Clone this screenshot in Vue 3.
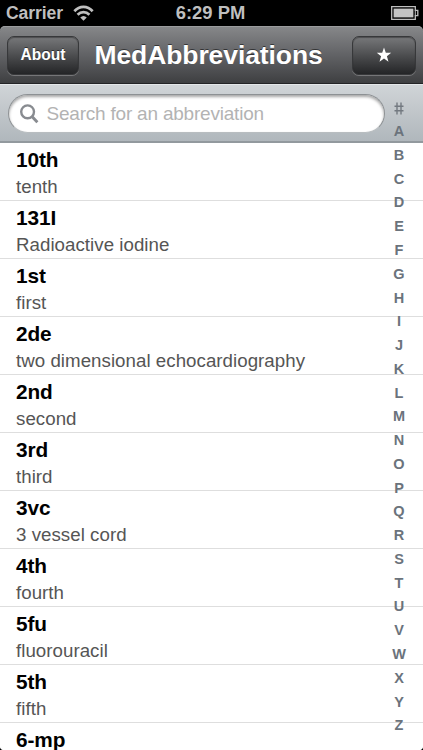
<script setup>
const rows = [
  ['10th', 'tenth'],
  ['131I', 'Radioactive iodine'],
  ['1st', 'first'],
  ['2de', 'two dimensional echocardiography'],
  ['2nd', 'second'],
  ['3rd', 'third'],
  ['3vc', '3 vessel cord'],
  ['4th', 'fourth'],
  ['5fu', 'fluorouracil'],
  ['5th', 'fifth'],
  ['6-mp', ''],
]
const letters = 'ABCDEFGHIJKLMNOPQRSTUVWXYZ'.split('')
</script>

<template>
  <div class="phone">
    <div class="status">
      <div class="carrier">
        <span>Carrier</span>
        <svg class="wifi" width="21" height="16" viewBox="0 0 22 16" preserveAspectRatio="none">
          <g fill="none" stroke="#bfbfbf" stroke-width="2.8">
            <path d="M1.4 6.2C6.8.4 15.2.4 20.6 6.2" />
            <path d="M4.8 9.8c3.6-3.7 8.8-3.7 12.4 0" />
          </g>
          <path d="M7.6 12.4c2.1-2 4.7-2 6.8 0L11 15.8z" fill="#bfbfbf" />
        </svg>
      </div>
      <span class="time">6:29 PM</span>
      <svg class="battery" width="28" height="14" viewBox="0 0 28 14">
        <path d="M.7.7h23.6v3.6h2.5v5.4h-2.5v3.6H.7z" fill="none" stroke="#bfbfbf" stroke-width="1.3" />
        <rect x="2.6" y="2.6" width="19.8" height="8.8" fill="#c4c4c4" />
        <path d="M24.3 4.5v5" stroke="#bfbfbf" stroke-width="1" />
      </svg>
    </div>
    <header class="nav">
      <button class="btn about"><span>About</span></button>
      <h1><span>MedAbbreviations</span></h1>
      <button class="btn fav">
        <svg width="16" height="16" viewBox="0 0 16 16">
          <path d="M8 .5l1.8 5.3h5.4l-4.3 3.5 1.6 5.5L8 11.6l-4.5 3.2 1.6-5.5L.8 5.8h5.4z" fill="#fff" />
        </svg>
      </button>
    </header>
    <div class="search">
      <div class="field">
        <svg width="20" height="22" viewBox="0 0 20 22">
          <circle cx="7.6" cy="8.8" r="6.4" fill="none" stroke="#888b90" stroke-width="2.4" />
          <path d="M12 13.4l5.4 5.8" stroke="#888b90" stroke-width="2.9" />
        </svg>
        <span>Search for an abbreviation</span>
      </div>
    </div>
    <ul class="list">
      <li v-for="r in rows" :key="r[0]">
        <strong>{{ r[0] }}</strong>
        <span v-if="r[1]">{{ r[1] }}</span>
      </li>
    </ul>
    <nav class="index">
      <span class="hash">
        <svg width="10" height="13" viewBox="0 0 10 13">
          <path d="M3 .4v12.2M7 .4v12.2M.5 4.2h9M.5 8.8h9" fill="none" stroke="#737980" stroke-width="1.4" />
        </svg>
      </span>
      <span v-for="l in letters" :key="l">{{ l }}</span>
    </nav>
    <i class="corner left"></i>
    <i class="corner right"></i>
  </div>
</template>

<style>
body { margin: 0; overflow: hidden; background: #000; }
</style>

<style scoped>
.phone {
  position: relative;
  display: flex;
  flex-direction: column;
  width: 423px;
  height: 750px;
  overflow: hidden;
  background: #000;
  font-family: "Liberation Sans", Arial, sans-serif;
}
.status {
  display: grid;
  grid-template-columns: 1fr auto 1fr;
  align-items: center;
  height: 26px;
  flex: none;
  padding: 0 4px 0 6px;
  color: #bfbfbf;
  font-size: 18.4px;
  font-weight: bold;
}
.carrier { display: flex; align-items: center; gap: 10px; font-size: 17.6px; letter-spacing: -0.12px; }
.time { letter-spacing: 0; margin-right: 4px; }
.battery { justify-self: end; }
.nav {
  display: flex;
  align-items: center;
  box-sizing: border-box;
  flex: none;
  height: 58px;
  padding: 1px 7px 0 7px;
  border-radius: 5px 5px 0 0;
  border-bottom: 1px solid #232426;
  background: linear-gradient(#87888a, #626366 50%, #3e3f41);
  box-shadow: inset 0 1px #9b9c9e;
}
h1 {
  flex: 1;
  margin: 0;
  padding: 0 0 1px 15.5px;
  color: #fff;
  font-size: 26.5px;
  line-height: 32px;
  letter-spacing: -0.1px;
  white-space: nowrap;
  text-shadow: 0 -1px rgba(0, 0, 0, .5);
}
.btn {
  display: flex;
  align-items: center;
  justify-content: center;
  box-sizing: border-box;
  height: 39px;
  padding: 0;
  border: 1px solid #37383a;
  border-radius: 7px;
  background: linear-gradient(#77787a, #48494b 55%, #242527);
  box-shadow: 0 1px rgba(255, 255, 255, .25), inset 0 1px 1px rgba(0, 0, 0, .35);
  color: #fff;
  font: bold 15.6px "Liberation Sans", Arial, sans-serif;
  text-shadow: 0 -1px rgba(0, 0, 0, .5);
}
.about { width: 72px; }
.fav { width: 64px; }
.search {
  box-sizing: border-box;
  flex: none;
  height: 59px;
  padding: 9px 38px 0 8px;
  border-top: 1px solid #e4e7e9;
  border-bottom: 2px solid #92999e;
  background: linear-gradient(#d0d4d7, #b0b7bc);
}
.field {
  display: flex;
  align-items: center;
  gap: 6.5px;
  box-sizing: border-box;
  height: 39px;
  padding-left: 11px;
  border: 1px solid #8d9194;
  border-bottom-color: #b8bdc0;
  border-radius: 20px;
  background: #fff;
  box-shadow: inset 0 2px 3px rgba(0, 0, 0, .35);
  color: #b3b3b3;
  font-size: 19px;
  letter-spacing: -0.21px;
}
.list {
  flex: 1;
  min-height: 0;
  margin: 0;
  padding: 0;
  list-style: none;
  overflow: hidden;
  background: #fff;
}
.list li {
  display: flex;
  flex-direction: column;
  box-sizing: border-box;
  height: 58px;
  padding: 4px 0 0 16px;
  border-bottom: 1px solid #dedede;
}
.list strong { color: #000; font-size: 20.8px; line-height: 26px; letter-spacing: -0.1px; }
.list span { color: #555; font-size: 18.7px; line-height: 27px; letter-spacing: 0.04px; }
.index {
  position: absolute;
  top: 96.4px;
  right: 14px;
  display: flex;
  flex-direction: column;
  width: 20px;
  color: #6b737c;
  font-size: 14.5px;
  font-weight: bold;
}
.index span { height: 23.77px; line-height: 23.77px; text-align: center; }
.index .hash { display: flex; align-items: center; justify-content: center; }
.corner { position: absolute; bottom: 0; width: 3px; height: 3px; }
.left { left: 0; background: radial-gradient(circle at 100% 0, transparent 2.5px, #000 3.3px); }
.right { right: 0; background: radial-gradient(circle at 0 0, transparent 2.5px, #000 3.3px); }
</style>
